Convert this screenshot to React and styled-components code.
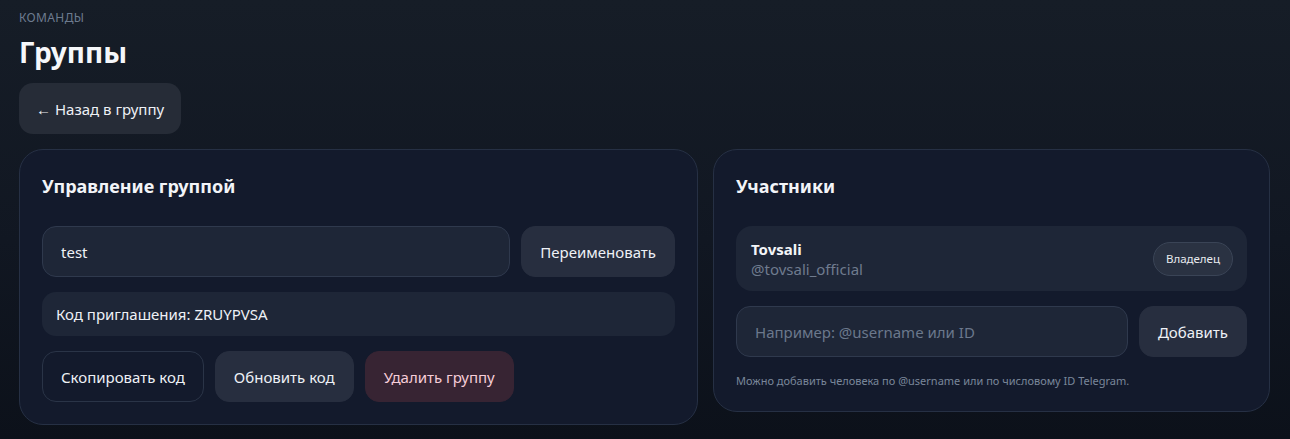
import React, { useState } from "react";
import styled, { createGlobalStyle } from "styled-components";

const GlobalStyle = createGlobalStyle`
  html, body {
    margin: 0;
    padding: 0;
    background: #0f141d;
  }
  body {
    font-family: "Segoe UI", "Noto Sans", "Open Sans", sans-serif;
    color: #eef1f6;
  }
  * {
    box-sizing: border-box;
  }
`;

function App() {
  const [name, setName] = useState("test");
  const [member, setMember] = useState("");

  return (
    <Page>
      <GlobalStyle />
      <Eyebrow>Команды</Eyebrow>
      <Title>Группы</Title>
      <BackButton>← Назад в группу</BackButton>

      <Columns>
        <Card>
          <CardTitle>Управление группой</CardTitle>
          <Stack>
            <Row>
              <Field value={name} onChange={(e) => setName(e.target.value)} />
              <Button>Переименовать</Button>
            </Row>
            <CodeBox>Код приглашения: ZRUYPVSA</CodeBox>
            <Actions>
              <Button $variant="outline">Скопировать код</Button>
              <Button>Обновить код</Button>
              <Button $variant="danger">Удалить группу</Button>
            </Actions>
          </Stack>
        </Card>

        <Card>
          <CardTitle>Участники</CardTitle>
          <Stack>
            <Member>
              <MemberInfo>
                <MemberName>Tovsali</MemberName>
                <MemberHandle>@tovsali_official</MemberHandle>
              </MemberInfo>
              <Badge>Владелец</Badge>
            </Member>
            <Row>
              <Field
                placeholder="Например: @username или ID"
                value={member}
                onChange={(e) => setMember(e.target.value)}
              />
              <Button>Добавить</Button>
            </Row>
          </Stack>
          <Hint>Можно добавить человека по @username или по числовому ID Telegram.</Hint>
        </Card>
      </Columns>
    </Page>
  );
}

export default App;

const Page = styled.div`
  min-height: 439px;
  padding: 8px 20px 14px 19px;
  background: linear-gradient(180deg, #161d27 0%, #111722 55%, #0c111a 100%);
`;

const Eyebrow = styled.div`
  font-size: 12px;
  line-height: 19px;
  letter-spacing: 0.03em;
  text-transform: uppercase;
  color: #6d7b8f;
`;

const Title = styled.h1`
  margin: 7px 0 0;
  font-size: 28px;
  line-height: 36px;
  font-weight: 700;
  color: #f5f7fa;
`;

const BackButton = styled.button`
  display: block;
  margin-top: 13px;
  height: 51px;
  padding: 0 17px;
  border: none;
  border-radius: 14px;
  background: #262c37;
  color: #eef1f6;
  font-family: inherit;
  font-size: 15px;
`;

const Columns = styled.div`
  display: grid;
  grid-template-columns: 679fr 557fr;
  gap: 15px;
  align-items: start;
  margin-top: 15px;
`;

const Card = styled.section`
  padding: 22px;
  border: 1px solid #263044;
  border-radius: 24px;
  background: #131a2c;
`;

const CardTitle = styled.h2`
  margin: 0 0 26px;
  font-size: 18px;
  line-height: 28px;
  font-weight: 700;
  color: #f2f4f8;
`;

const Stack = styled.div`
  display: flex;
  flex-direction: column;
  gap: 15px;
`;

const Row = styled.div`
  display: flex;
  gap: 11px;
`;

const Actions = styled.div`
  display: flex;
  gap: 11px;
`;

const Field = styled.input`
  flex: 1;
  min-width: 0;
  height: 51px;
  padding: 0 18px;
  border: 1px solid #2f394d;
  border-radius: 14px;
  background: #1e2637;
  color: #eef1f6;
  font-family: inherit;
  font-size: 15px;
  outline: none;
  &::placeholder {
    color: #6b788c;
  }
`;

const variants = {
  default: "background: #272e3f; border-color: #272e3f; color: #eef1f6;",
  outline: "background: transparent; border-color: #2a3447; color: #eef1f6;",
  danger: "background: #372433; border-color: #372433; color: #f6cdd8;",
};

const Button = styled.button`
  flex: none;
  height: 51px;
  padding: 0 18px;
  border: 1px solid;
  border-radius: 14px;
  font-family: inherit;
  font-size: 15px;
  white-space: nowrap;
  ${(p) => variants[p.$variant || "default"]}
`;

const CodeBox = styled.div`
  display: flex;
  align-items: center;
  height: 44px;
  padding: 0 14px;
  border-radius: 14px;
  background: #1e2637;
  font-size: 15px;
  color: #eef1f6;
`;

const Member = styled.div`
  display: flex;
  align-items: center;
  justify-content: space-between;
  height: 65px;
  padding: 0 14px 0 15px;
  border-radius: 16px;
  background: #1e2637;
`;

const MemberInfo = styled.div`
  display: flex;
  flex-direction: column;
`;

const MemberName = styled.div`
  font-size: 15px;
  line-height: 20px;
  font-weight: 700;
  color: #f3f5f8;
`;

const MemberHandle = styled.div`
  font-size: 15px;
  line-height: 20px;
  color: #6f7b8e;
`;

const Badge = styled.span`
  display: flex;
  align-items: center;
  height: 34px;
  padding: 0 12px;
  border: 1px solid #3a4456;
  border-radius: 999px;
  background: #2a3242;
  font-size: 11.5px;
  color: #e8ebf0;
`;

const Hint = styled.p`
  margin: 16px 0 0;
  font-size: 11px;
  line-height: 16px;
  color: #7a879a;
`;
